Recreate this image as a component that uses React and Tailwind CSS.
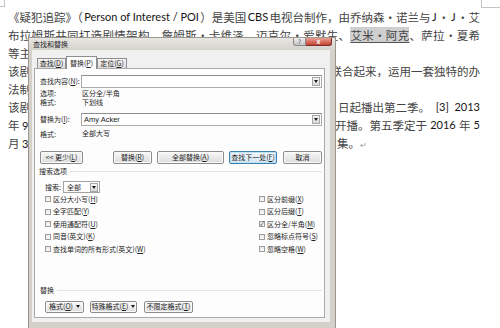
import React from "react";

const lat = "font-['Lato','Liberation_Sans',sans-serif] text-[11px] text-[#161616]";

function U({ children }) {
  return <span className="underline">{children}</span>;
}

function Tri() {
  return <div className="w-0 h-0 border-l-[2.5px] border-r-[2.5px] border-t-[3px] border-l-transparent border-r-transparent border-t-[#1a1a1a]" />;
}

function ArrowBox() {
  return (
    <div className="w-[8px] h-[9px] mr-px shrink-0 border border-[#a6a6a6] bg-linear-to-b from-[#f6f6f6] to-[#d9d9d9] flex items-center justify-center">
      <Tri />
    </div>
  );
}

function Combo({ children }) {
  return (
    <div className="flex-1 h-full border border-[#ababab] border-t-[#8e8e8e] bg-white flex items-center">
      <span className="flex-1 pl-[2px] font-['Liberation_Sans',sans-serif] text-[7.5px] text-[#222]">{children}</span>
      <ArrowBox />
    </div>
  );
}

function Btn({ className = "", children, primary }) {
  return (
    <div
      className={
        "h-full shrink-0 flex items-center justify-center rounded-[2px] border leading-none text-[#1f1f1f] " +
        (primary
          ? "border-[#3c7fb1] bg-linear-to-b from-[#f2f8fd] to-[#d3e6f3] shadow-[inset_0_0_0_1px_#bfe2f7] "
          : "border-[#8c8c8c] bg-linear-to-b from-[#f8f8f8] to-[#dcdcdc] shadow-[inset_0_0_0_1px_#fbfbfb] ") +
        className
      }
    >
      {children}
    </div>
  );
}

function Check({ children, checked }) {
  return (
    <div className="h-[12.5px] flex items-center">
      <div className="w-[6px] h-[6px] shrink-0 border border-[#9d9d9d] bg-linear-to-b from-[#e9e9e9] to-[#fafafa] flex items-center justify-center text-[6px] leading-none text-[#333]">
        {checked ? "✓" : null}
      </div>
      <span className="ml-[2px] whitespace-nowrap">{children}</span>
    </div>
  );
}

function Dialog() {
  return (
    <div className="absolute left-[28px] top-[37px] w-[308px] h-[292px] border border-[#9b978f] bg-[#d4d1cb] flex flex-col font-['Noto_Sans_CJK_SC',sans-serif] text-[7px] text-[#262626]">
      <div className="h-[12px] shrink-0 flex items-start bg-linear-to-b from-[#e7e6e3] to-[#d6d3cd]">
        <span className="ml-[4px] mt-[3px] leading-[7px]">查找和替换</span>
        <div className="ml-auto mr-[3px] flex">
          <div className="w-[13px] h-[8px] rounded-bl-[3px] border border-t-0 border-[#8a8a8a] bg-linear-to-b from-[#f0f0f0] to-[#c4c4c4] flex items-center justify-center text-[6px] leading-none text-[#333]">?</div>
          <div className="w-[26px] h-[8px] rounded-br-[3px] border border-t-0 border-l-0 border-[#80302a] bg-linear-to-b from-[#e9a094] to-[#c2402f] flex items-center justify-center text-[7px] leading-none font-bold text-white">x</div>
        </div>
      </div>

      <div className="h-[272px] shrink-0 ml-[3px] mr-[5px] bg-[#f0f0f0] pt-[6px] pl-[2px] pr-[5px] flex flex-col">
        <div className="relative z-10 -mb-px h-[13px] flex items-end pl-[3px]">
          <div className="mb-px h-[10px] w-[29px] border border-b-0 border-[#8e8e8e] bg-linear-to-b from-[#f5f5f5] to-[#dddddd] flex items-center justify-center leading-none">
            查找(<U>D</U>)
          </div>
          <div className="h-[13px] w-[31px] border border-b-0 border-[#8e8e8e] bg-[#fdfdfd] flex items-center justify-center leading-none">
            替换(<U>P</U>)
          </div>
          <div className="mb-px h-[10px] w-[30px] border border-b-0 border-[#8e8e8e] bg-linear-to-b from-[#f5f5f5] to-[#dddddd] flex items-center justify-center leading-none">
            定位(<U>G</U>)
          </div>
        </div>

        <div className="h-[250px] w-[291px] border border-[#a9a9a9] bg-[#fdfdfd] pl-[5px] pr-[2px] flex flex-col leading-none">
          <div className="mt-[6px] h-[13px] flex items-center">
            <span className="w-[41px] shrink-0">查找内容(<U>N</U>):</span>
            <Combo />
          </div>
          <div className="mt-px h-[8px] flex items-center">
            <span className="w-[42px] shrink-0">选项:</span>
            <span>区分全/半角</span>
          </div>
          <div className="mt-px h-[8px] flex items-center">
            <span className="w-[42px] shrink-0">格式:</span>
            <span>下划线</span>
          </div>
          <div className="mt-[7px] h-[13px] flex items-center">
            <span className="w-[41px] shrink-0">替换为(<U>I</U>):</span>
            <Combo>Amy Acker</Combo>
          </div>
          <div className="mt-[3px] h-[9px] flex items-center">
            <span className="w-[42px] shrink-0 mt-[2px]">格式:</span>
            <span>全部大写</span>
          </div>

          <div className="mt-[13px] h-[13px] flex">
            <Btn className="w-[43px]">&lt;&lt; 更少(<U>L</U>)</Btn>
            <Btn className="ml-[30px] w-[39px]">替换(<U>R</U>)</Btn>
            <Btn className="ml-[5px] w-[67px]">全部替换(<U>A</U>)</Btn>
            <Btn className="ml-[5px] w-[48px]" primary>查找下一处(<U>F</U>)</Btn>
            <Btn className="ml-[6px] w-[39px]">取消</Btn>
          </div>

          <div className="mt-[3px] h-[8px] flex items-center -ml-px">
            <span>搜索选项</span>
            <div className="ml-[3px] flex-1 h-px bg-[#e4e4e4]" />
          </div>

          <div className="mt-[6px] h-[12px] flex items-center pl-[5px]">
            <span className="w-[18px] shrink-0">搜索:</span>
            <div className="w-[37px] h-full border border-[#a3a3a3] bg-white flex items-center">
              <span className="flex-1 pl-[3px]">全部</span>
              <ArrowBox />
            </div>
          </div>

          <div className="grid grid-cols-[214px_1fr] pl-[5px]">
            <Check>区分大小写(<U>H</U>)</Check>
            <Check>区分前缀(<U>X</U>)</Check>
            <Check>全字匹配(<U>Y</U>)</Check>
            <Check>区分后缀(<U>T</U>)</Check>
            <Check>使用通配符(<U>U</U>)</Check>
            <Check checked>区分全/半角(<U>M</U>)</Check>
            <Check>同音(英文)(<U>K</U>)</Check>
            <Check>忽略标点符号(<U>S</U>)</Check>
            <Check>查找单词的所有形式(英文)(<U>W</U>)</Check>
            <Check>忽略空格(<U>W</U>)</Check>
          </div>

          <div className="mt-[31px] h-[8px] flex items-center">
            <span>替换</span>
            <div className="ml-[3px] flex-1 h-px bg-[#e4e4e4]" />
          </div>

          <div className="mt-[6px] h-[12px] flex pl-[5px]">
            <Btn className="w-[39px] gap-[3px]">
              <span>格式(<U>O</U>)</span>
              <Tri />
            </Btn>
            <Btn className="ml-[6px] w-[47px] gap-[3px]">
              <span>特殊格式(<U>E</U>)</span>
              <Tri />
            </Btn>
            <Btn className="ml-[7px] w-[49px]">不限定格式(<U>T</U>)</Btn>
          </div>
        </div>
      </div>
    </div>
  );
}

export default function App() {
  return (
    <div className="relative w-[500px] h-[328px] overflow-hidden bg-white">
      <div className="absolute left-0 top-0 w-[5px] h-[7px] border-r border-b border-[#c4c4c4]" />
      <div className="absolute left-[481px] top-0 w-[19px] h-[8px] border-l border-b border-[#c4c4c4]" />

      <div className="w-[480px] pl-[8px] pt-[8px] text-[11.5px] leading-[18px] text-[#444] font-['Noto_Sans_CJK_SC',sans-serif]">
        <div className="h-[18px] flex justify-between overflow-hidden whitespace-nowrap">
          <span>《疑犯追踪》（</span>
          <span className={lat}>Person of Interest / POI</span>
          <span>）是美国</span>
          <span className={lat}>CBS</span>
          <span>电视台制作，由乔纳森・诺兰与</span>
          <span className={lat}>J</span>
          <span>・</span>
          <span className={lat}>J</span>
          <span>・艾</span>
        </div>
        <div className="h-[18px] overflow-hidden text-justify [text-align-last:justify]">
          布拉姆斯共同打造剧情架构，詹姆斯・卡维泽、迈克尔・爱默生、
          <span className="bg-[#cfcfcf] underline decoration-[#555] underline-offset-2">艾米・阿克</span>
          、萨拉・夏希
        </div>
        <div className="h-[18px] overflow-hidden whitespace-nowrap">等主演的科幻犯罪剧。</div>
        <div className="h-[18px] flex">
          <div className="w-[319px] shrink-0 overflow-hidden whitespace-nowrap">该剧讲述了前中情局特工与一位神秘的亿万富翁</div>
          <div className="flex-1 text-right whitespace-nowrap">联合起来，运用一套独特的办</div>
        </div>
        <div className="h-[18px] overflow-hidden whitespace-nowrap">法制止犯罪的故事。</div>
        <div className="h-[18px] flex">
          <div className="w-[330px] shrink-0 overflow-hidden whitespace-nowrap">该剧于2012年9月27日起播出第二季。</div>
          <div className="flex-1 flex justify-between whitespace-nowrap">
            <span>日起播出第二季。</span>
            <span className={lat}>[3]</span>
            <span className={lat}>2013</span>
          </div>
        </div>
        <div className="h-[18px] flex">
          <div className="w-[327px] shrink-0 overflow-hidden whitespace-nowrap">
            年 <span className={lat}>9</span> 月第三季开播。第四季于同年九月开播。
          </div>
          <div className="flex-1 flex justify-between whitespace-nowrap">
            <span>开播。第五季定于</span>
            <span className={lat}>2016</span>
            <span>年</span>
            <span className={lat}>5</span>
          </div>
        </div>
        <div className="h-[18px] flex">
          <div className="w-[329px] shrink-0 overflow-hidden whitespace-nowrap">
            月 <span className={lat}>3</span> 日开播，共十三集。
          </div>
          <div className="flex-1 whitespace-nowrap">
            集。<span className="text-[8px] text-[#9a9a9a]">↵</span>
          </div>
        </div>
      </div>

      <Dialog />
    </div>
  );
}
